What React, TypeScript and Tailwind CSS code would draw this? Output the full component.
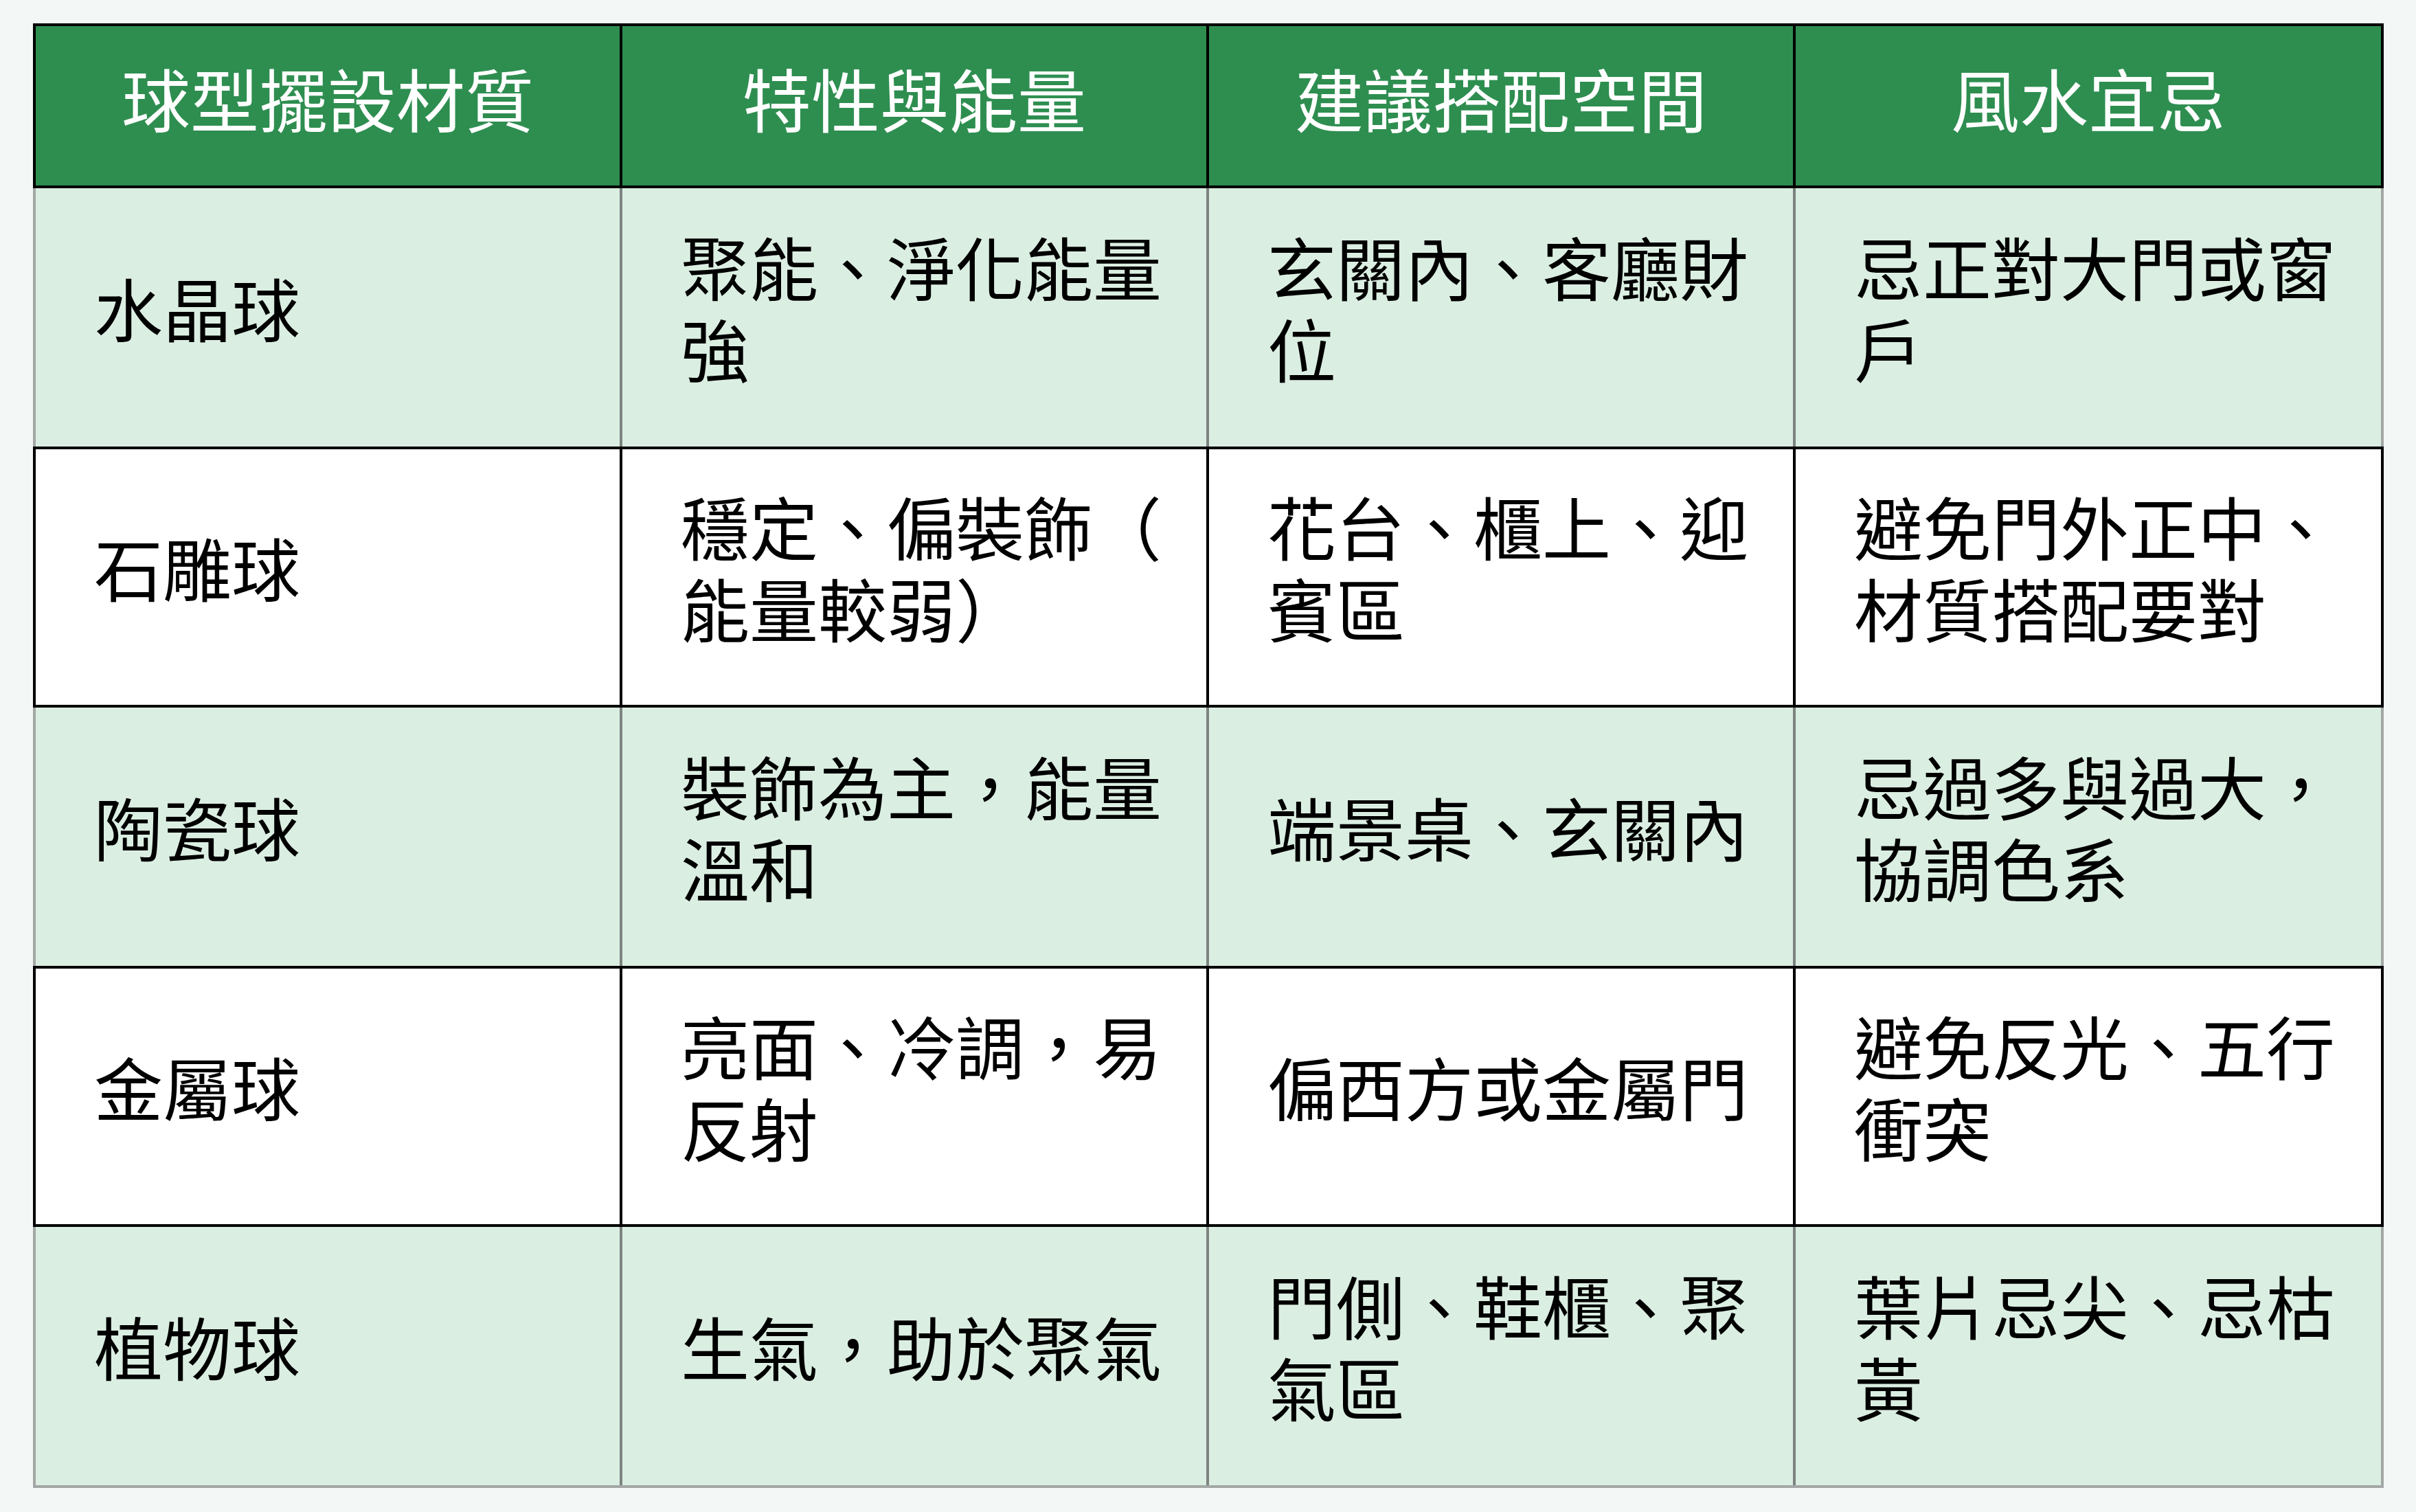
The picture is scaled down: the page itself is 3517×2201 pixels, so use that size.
import React from "react";

type Row = { cells: string[][]; green: boolean; h: string };

const header = ["球型擺設材質", "特性與能量", "建議搭配空間", "風水宜忌"];

const rows: Row[] = [
  {
    green: true,
    h: "h-[376px]",
    cells: [["水晶球"], ["聚能、淨化能量", "強"], ["玄關內、客廳財", "位"], ["忌正對大門或窗", "戶"]],
  },
  {
    green: false,
    h: "h-[380px]",
    cells: [["石雕球"], ["穩定、偏裝飾（", "能量較弱）"], ["花台、櫃上、迎", "賓區"], ["避免門外正中、", "材質搭配要對"]],
  },
  {
    green: true,
    h: "h-[376px]",
    cells: [["陶瓷球"], ["裝飾為主，能量", "溫和"], ["端景桌、玄關內"], ["忌過多與過大，", "協調色系"]],
  },
  {
    green: false,
    h: "h-[380px]",
    cells: [["金屬球"], ["亮面、冷調，易", "反射"], ["偏西方或金屬門"], ["避免反光、五行", "衝突"]],
  },
  {
    green: true,
    h: "h-[380px]",
    cells: [["植物球"], ["生氣，助於聚氣"], ["門側、鞋櫃、聚", "氣區"], ["葉片忌尖、忌枯", "黃"]],
  },
];

export default function App() {
  return (
    <div
      className="min-h-[2201px] w-[3517px] bg-[#f3f7f5] pl-[48px] pt-[34px]"
      style={{ fontFamily: '"Noto Sans CJK TC", "Noto Sans", sans-serif' }}
    >
      <div className="w-[3422px]">
        <div className="grid h-[240px] grid-cols-[850px_854px_854px_1fr] border-4 border-black bg-[#2e8e50] text-[100px] leading-[119px] text-white">
          {header.map((t, i) => (
            <div
              key={t}
              className={`flex items-center justify-center pb-[26px] ${i > 0 ? "border-l-4 border-black" : ""}`}
            >
              {t}
            </div>
          ))}
        </div>
        {rows.map((r, ri) => (
          <div
            key={ri}
            className={
              r.green
                ? `grid grid-cols-[850px_854px_854px_1fr] ${r.h} border-x-4 ${ri === rows.length - 1 ? "border-b-4" : ""} border-[#a3a7a5] bg-[#dbeee2]`
                : `grid grid-cols-[850px_854px_854px_1fr] ${r.h} border-4 border-black bg-white`
            }
          >
            {r.cells.map((lines, ci) => (
              <div
                key={ci}
                className={`flex flex-col justify-center pl-[85px] pb-[32px] text-[100px] leading-[119px] text-black ${
                  ci > 0 ? (r.green ? "border-l-4 border-[#7d8380]" : "border-l-4 border-black") : ""
                }`}
              >
                {lines.map((l) => (
                  <span key={l} className="block whitespace-nowrap">
                    {l}
                  </span>
                ))}
              </div>
            ))}
          </div>
        ))}
      </div>
    </div>
  );
}
